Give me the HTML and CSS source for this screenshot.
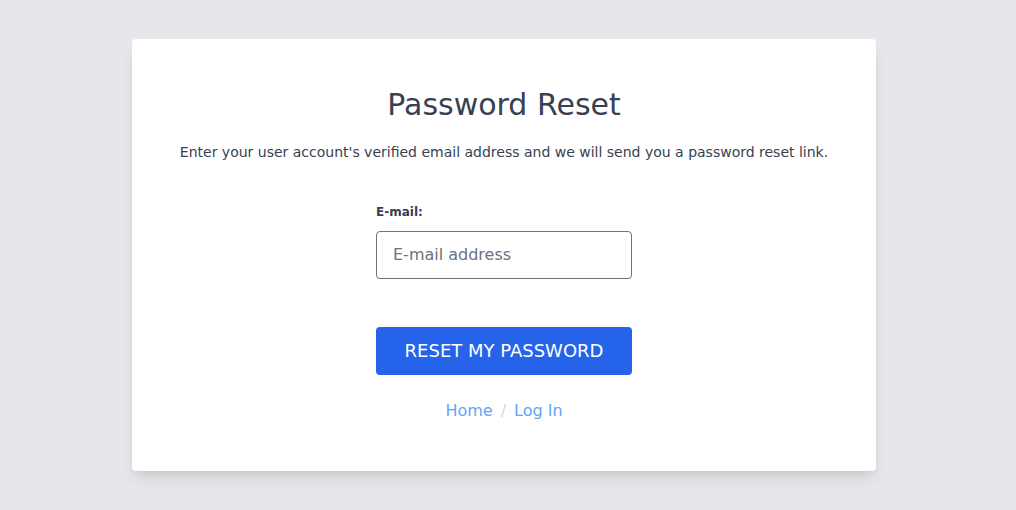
FILE: index.html
```html
<!DOCTYPE html>
<html lang="en">
<head>
<meta charset="utf-8">
<title>Password Reset</title>
<link rel="stylesheet" href="styles.css">
</head>
<body>
<main class="page">
  <section class="card">
    <h1 class="title">Password Reset</h1>
    <p class="intro">Enter your user account's verified email address and we will send you a password reset link.</p>
    <form class="form">
      <label class="label" for="email">E-mail:</label>
      <input class="input" id="email" type="email" placeholder="E-mail address">
      <button class="button" type="button">RESET MY PASSWORD</button>
    </form>
    <nav class="links">
      <a class="link" href="#">Home</a>
      <span class="sep">/</span>
      <a class="link" href="#">Log In</a>
    </nav>
  </section>
</main>
</body>
</html>
```

FILE: styles.css
```css
* { box-sizing: border-box; }
html, body {
  margin: 0;
  padding: 0;
  background: #e5e7eb;
  font-family: "DejaVu Sans", sans-serif;
  color: #374151;
}
.page {
  padding: 39px 140px 39px 132px;
}
.card {
  background: #fff;
  border-radius: 4px;
  box-shadow: 0 10px 15px -3px rgba(0,0,0,0.1), 0 4px 6px -2px rgba(0,0,0,0.05);
  padding: 48px 32px 48px;
  display: flex;
  flex-direction: column;
  align-items: center;
}
.title {
  margin: 0;
  font-size: 30px;
  line-height: 36px;
  font-weight: 400;
  color: #374151;
}
.intro {
  margin: 19px 0 0;
  font-size: 14px;
  line-height: 20px;
}
.form {
  margin-top: 42px;
  width: 256px;
  display: flex;
  flex-direction: column;
}
.label {
  font-size: 12px;
  line-height: 16px;
  font-weight: 700;
  margin-bottom: 11px;
}
.input {
  height: 48px;
  border: 1px solid #6b7280;
  border-radius: 4px;
  padding: 0 16px 2px;
  font-family: inherit;
  font-size: 16px;
  color: #374151;
  outline: none;
}
.input::placeholder { color: #6b7280; }
.button {
  margin-top: 48px;
  height: 48px;
  border: 0;
  border-radius: 4px;
  padding: 0 0 2px;
  background: #2563eb;
  color: #fff;
  font-family: inherit;
  font-size: 18px;
  cursor: pointer;
}
.links {
  margin-top: 24px;
  display: flex;
  gap: 8px;
  font-size: 16px;
  line-height: 24px;
}
.link {
  color: #60a5fa;
  text-decoration: none;
}
.sep { color: #d1d5db; }
```
